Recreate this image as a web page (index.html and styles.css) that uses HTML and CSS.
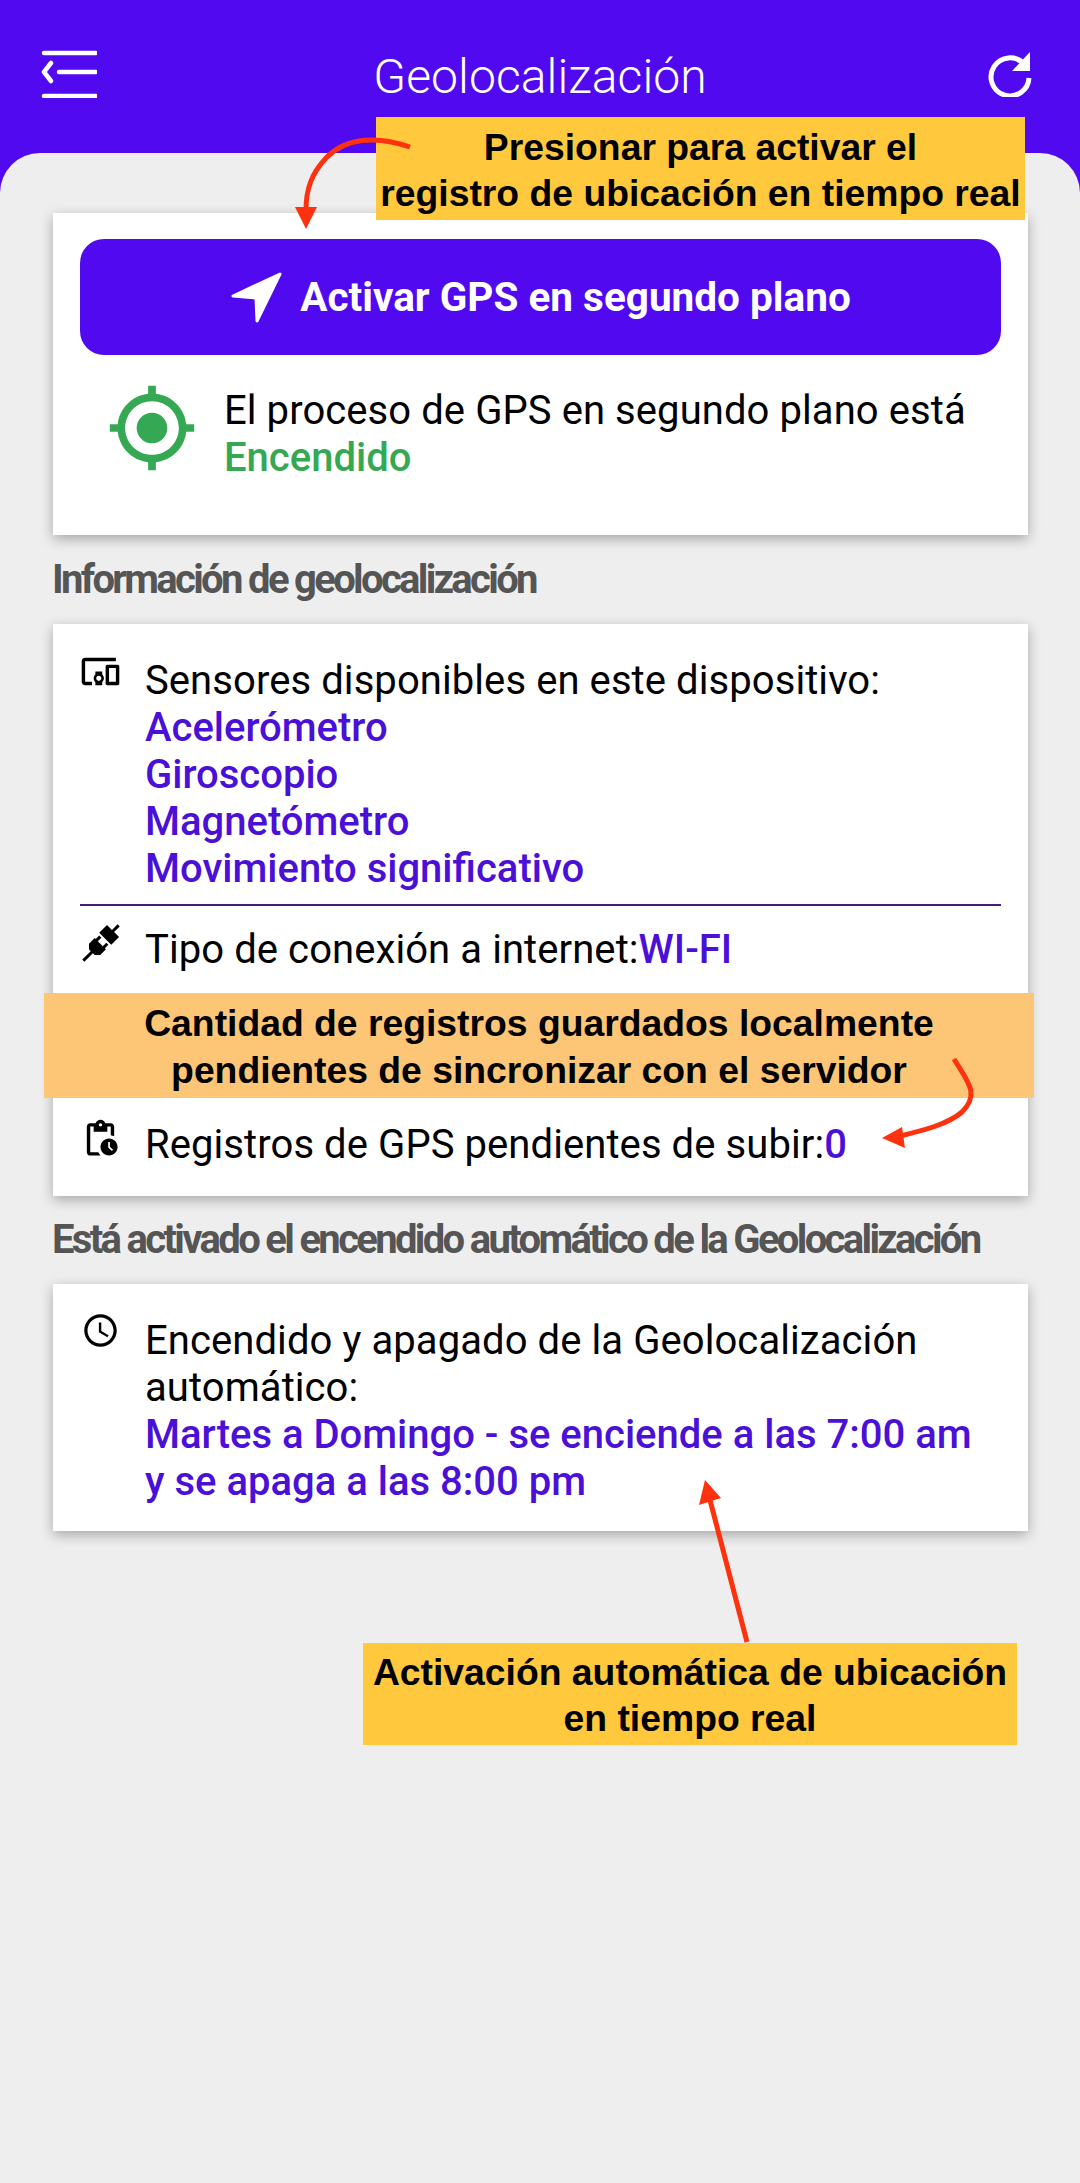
FILE: index.html
```html
<!DOCTYPE html>
<html lang="es">
<head>
    <meta charset="UTF-8">
    <meta name="viewport" content="width=device-width, initial-scale=1.0">
    <title>Geolocalización</title>
    <link rel="stylesheet" href="styles.css">
</head>
<body>
<div class="page">
    <!-- Header -->
    <header class="topbar">
        <svg class="topbar-icon" width="56" height="48" viewBox="0 0 56 48" fill="none" stroke="#fff" stroke-width="4.5" stroke-linecap="round" stroke-linejoin="round">
            <path d="M3 3h52M18 22h37M3 46h52M10 13l-7 9 7 9"/>
        </svg>
        <div class="topbar-title">Geolocalización</div>
        <svg class="topbar-icon" width="46" height="46" viewBox="0 0 46 46" fill="none">
            <path d="M36 13A19 19 0 1 0 41 27" stroke="#fff" stroke-width="5"/>
            <path d="M42 1v19H24z" fill="#fff"/>
        </svg>
    </header>

    <main class="sheet">
        <section class="card card-gps">
            <button class="gps-button">
                <svg width="52" height="52" viewBox="0 0 52 52">
                    <path d="M50 3L3 25l23 2 1 23z" fill="#fff" stroke="#fff" stroke-width="3" stroke-linejoin="round"/>
                </svg>
                <span>Activar GPS en segundo plano</span>
            </button>
            <div class="gps-status">
                <svg class="gps-status-icon" width="92" height="92" viewBox="0 0 24 24">
                    <path fill="#34a853" d="M12 8c-2.21 0-4 1.79-4 4s1.79 4 4 4 4-1.79 4-4-1.79-4-4-4zm8.94 3c-.46-4.17-3.77-7.48-7.94-7.94V1h-2v2.06C6.83 3.52 3.52 6.83 3.06 11H1v2h2.06c.46 4.17 3.77 7.48 7.94 7.94V23h2v-2.06c4.17-.46 7.48-3.77 7.94-7.94H23v-2h-2.06zM12 19c-3.87 0-7-3.13-7-7s3.13-7 7-7 7 3.13 7 7-3.13 7-7 7z"/>
                </svg>
                <div>
                    <div>El proceso de GPS en segundo plano está</div>
                    <div class="value value-on">Encendido</div>
                </div>
            </div>
        </section>

        <h2 class="section-title">Información de geolocalización</h2>
        <section class="card card-info">
            <div class="row">
                <svg class="row-icon" width="41" height="41" viewBox="0 0 24 24">
                    <path d="M3 6h18V4H3c-1.1 0-2 .9-2 2v12c0 1.1.9 2 2 2h4v-2H3V6zm10 6H9v1.78c-.61.55-1 1.33-1 2.22s.39 1.67 1 2.22V20h4v-1.78c.61-.55 1-1.34 1-2.22s-.39-1.67-1-2.22V12zm-2 5.5c-.83 0-1.5-.67-1.5-1.5s.67-1.5 1.5-1.5 1.5.67 1.5 1.5-.67 1.5-1.5 1.5zM22 8h-6c-.5 0-1 .5-1 1v10c0 .5.5 1 1 1h6c.5 0 1-.5 1-1V9c0-.5-.5-1-1-1zm-1 10h-4v-8h4v8z"/>
                </svg>
                <div>
                    <div>Sensores disponibles en este dispositivo:</div>
                    <div class="value">Acelerómetro</div>
                    <div class="value">Giroscopio</div>
                    <div class="value">Magnetómetro</div>
                    <div class="value">Movimiento significativo</div>
                </div>
            </div>
            <hr class="divider">
            <div class="row">
                <svg class="row-icon row-icon-plug" width="41" height="41" viewBox="0 0 41 41">
                    <g transform="rotate(45 21 23)">
                        <path d="M19.5-2h3v8h7v11h-17V6h7z"/>
                        <path d="M14.5 19h3v5h7v-5h3v5H29v8l-4 4h-2.5v12h-3V36H17l-4-4v-8h1.5z"/>
                    </g>
                </svg>
                <div>Tipo de conexión a internet:<span class="value">WI-FI</span></div>
            </div>
            <div class="row row-pending">
                <svg class="row-icon row-icon-clipboard" width="41" height="41" viewBox="0 0 24 24">
                    <path d="M17 12c-2.76 0-5 2.24-5 5s2.24 5 5 5 5-2.24 5-5-2.24-5-5-5zm1.65 7.35L16.5 17.2V14h1v2.79l1.85 1.85-.7.71zM18 3h-3.18C14.4 1.84 13.3 1 12 1s-2.4.84-2.82 2H6c-1.1 0-2 .9-2 2v15c0 1.1.9 2 2 2h6.11c-.59-.57-1.07-1.25-1.42-2H6V5h2v3h8V5h2v5.08c.71.1 1.38.31 2 .6V5c0-1.1-.9-2-2-2zm-6 2c-.55 0-1-.45-1-1s.45-1 1-1 1 .45 1 1-.45 1-1 1z"/>
                </svg>
                <div>Registros de GPS pendientes de subir:<span class="value">0</span></div>
            </div>
        </section>

        <h2 class="section-title section-title-auto">Está activado el encendido automático de la Geolocalización</h2>
        <section class="card card-auto">
            <div class="row">
                <svg class="row-icon row-icon-clock" width="39" height="39" viewBox="0 0 24 24">
                    <path d="M11.99 2C6.47 2 2 6.48 2 12s4.47 10 9.99 10C17.52 22 22 17.52 22 12S17.52 2 11.99 2zM12 20c-4.42 0-8-3.58-8-8s3.58-8 8-8 8 3.58 8 8-3.58 8-8 8zm.5-13H11v6l5.25 3.15.75-1.23-4.5-2.67z"/>
                </svg>
                <div>
                    <div>Encendido y apagado de la Geolocalización automático:</div>
                    <div class="value">Martes a Domingo - se enciende a las 7:00 am y se apaga a las 8:00 pm</div>
                </div>
            </div>
        </section>
    </main>

    <!-- Annotations pasted over the screenshot -->
    <div class="note note-top">Presionar para activar el<br>registro de ubicación en tiempo real</div>
    <div class="note note-middle">Cantidad de registros guardados localmente<br>pendientes de sincronizar con el servidor</div>
    <div class="note note-bottom">Activación automática de ubicación<br>en tiempo real</div>
    <svg class="arrows" width="1080" height="2183" viewBox="0 0 1080 2183" fill="none" stroke="#ff3210" stroke-width="5">
        <path d="M410 147C375 135 345 138 326 158C311 174 306 190 306 210"/>
        <path d="M295 207h22l-11 22z" fill="#ff3210" stroke="none"/>
        <path d="M954 1059C968 1082 980 1094 962 1112C948 1124 925 1130 900 1136"/>
        <path d="M882 1138l20-11 3 21z" fill="#ff3210" stroke="none"/>
        <path d="M747 1642L710 1500"/>
        <path d="M705 1480l16 18-22 7z" fill="#ff3210" stroke="none"/>
    </svg>
</div>
</body>
</html>
```

FILE: styles.css
```css
/* Global Styles */
html, body {
    margin: 0;
    padding: 0;
}

body {
    font-family: Roboto, sans-serif;
    font-size: 40px;
    line-height: 47px;
    letter-spacing: 0.08px;
    color: #000;
}

.page {
    position: relative;
    width: 1080px;
    height: 2183px;
    overflow: hidden;
    background: #5109f0;
    display: flex;
    flex-direction: column;
}

/* Header */
.topbar {
    height: 153px;
    flex: none;
    box-sizing: border-box;
    padding: 0 46px 0 41px;
    display: flex;
    justify-content: space-between;
    align-items: center;
}

.topbar-icon {
    flex: none;
    margin-bottom: 6px;
}

.topbar-title {
    color: #fff;
    font-size: 48px;
    font-weight: 300;
    margin-right: 5px;
}

/* Grey sheet */
.sheet {
    flex: 1;
    background: #eeeeee;
    border-radius: 40px 40px 0 0;
    padding: 60px 52px 0 53px;
}

/* Cards */
.card {
    background: #fff;
    box-shadow: 0 4px 12px rgba(0, 0, 0, 0.3);
    padding: 0 27px;
}

.card-gps {
    padding-top: 26px;
    padding-bottom: 54px;
}

.card-info {
    padding-top: 33px;
    padding-bottom: 28px;
}

.card-auto {
    padding-top: 33px;
    padding-bottom: 26px;
}

.gps-button {
    width: 100%;
    height: 116px;
    border: none;
    border-radius: 24px;
    background: #5109f0;
    color: #fff;
    font-family: inherit;
    font-size: 40.5px;
    font-weight: 700;
    display: flex;
    justify-content: center;
    align-items: center;
    gap: 18px;
    padding: 0;
}

.gps-status {
    display: flex;
    align-items: flex-start;
    gap: 26px;
    margin-top: 32px;
    padding-left: 26px;
}

.gps-status-icon {
    flex: none;
    margin-top: -5px;
}

.value {
    color: #4a10d8;
    font-weight: 500;
    letter-spacing: 0;
}

.value-on {
    color: #34a853;
}

.section-title {
    margin: 25px 0 24px -1px;
    font-size: 40px;
    line-height: 40px;
    font-weight: 700;
    letter-spacing: -2.67px;
    color: #555;
}

.section-title-auto {
    margin-top: 24px;
}

/* Rows with an icon on the left */
.row {
    display: flex;
    align-items: flex-start;
    gap: 24px;
}

.row-icon {
    flex: none;
    margin-top: -6px;
}

.row-icon-plug {
    overflow: visible;
}

.row-icon-clipboard {
    margin-top: -3px;
}

.row-icon-clock {
    margin: -6px 0 0 1px;
    padding-right: 1px;
}

.row-pending {
    margin-top: 148px;
}

.divider {
    border: none;
    height: 2px;
    background: #4a1a7a;
    margin: 12px 0 20px;
}

/* Annotations */
.arrows {
    position: absolute;
    left: 0;
    top: 0;
}

.note {
    position: absolute;
    box-sizing: border-box;
    font-family: "Liberation Sans", Arial, sans-serif;
    font-size: 37.3px;
    font-weight: 700;
    color: #000;
    text-align: center;
    letter-spacing: 0;
}

.note-top {
    left: 376px;
    top: 117px;
    width: 649px;
    height: 103px;
    background: #ffc83d;
    line-height: 46px;
    padding-top: 7px;
}

.note-middle {
    left: 44px;
    top: 993px;
    width: 990px;
    height: 105px;
    background: #fdc576;
    line-height: 47px;
    padding-top: 7px;
}

.note-bottom {
    left: 363px;
    top: 1643px;
    width: 654px;
    height: 102px;
    background: #ffc83d;
    line-height: 46px;
    padding-top: 6px;
}
```
